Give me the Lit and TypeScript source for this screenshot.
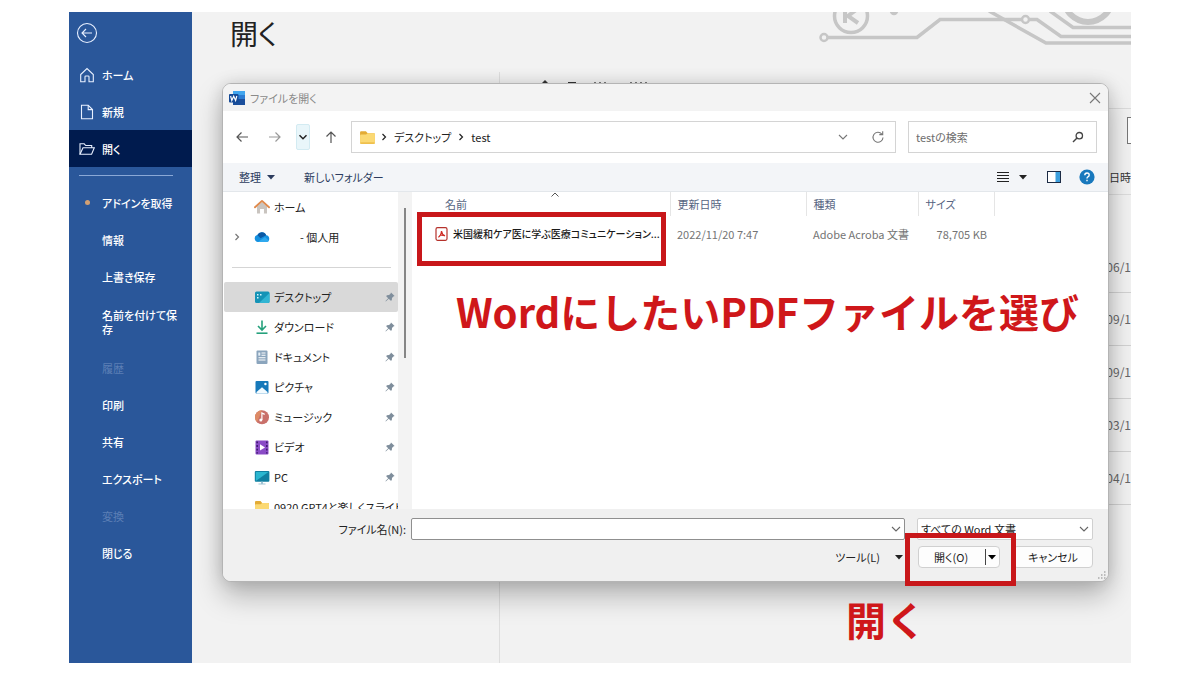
import { LitElement, html, css, svg, nothing } from "lit";
import { customElement } from "lit/decorators.js";
import { classMap } from "lit/directives/class-map.js";

const chevronDown = html`<svg class="chev" viewBox="0 0 10 10" width="10" height="10" aria-hidden="true">
  <path d="M1 3l4 4 4-4" fill="none" stroke="currentColor" stroke-width="1.1" />
</svg>`;
const chevronRight = html`<svg viewBox="0 0 8 8" width="8" height="8" aria-hidden="true">
  <path d="M2.5 1l3 3-3 3" fill="none" stroke="currentColor" stroke-width="1.2" />
</svg>`;
const triangle = html`<svg viewBox="0 0 8 5" width="8" height="5" aria-hidden="true">
  <path d="M0 0h8L4 4.6z" fill="currentColor" />
</svg>`;
const folderShape = svg`
  <path d="M1 3q0-1 1-1h4.5l1.7 2H14q1 0 1 1v8q0 1-1 1H2q-1 0-1-1z" fill="#e3ab35"/>
  <path d="M1 6q0-.8 1-.8h4.6L8.200 4H14q1 0 1 1v8q0 1-1 1H2q-1 0-1-1z" fill="#fbd974"/>
  <path d="M1.400 12.500h13.200V13q0 1-1 1H2.400q-1 0-1-1z" fill="#efc04d"/>`;
const pin = html`<svg viewBox="0 0 10 10" width="10" height="10" aria-hidden="true">
  <path d="M6 .4L9.600 4 8.400 4.500 7 6 6.800 8.200 5.800 8.800 3.700 6.800.8 9.400.5 9.100 3.200 6.300 1.200 4.200 1.900 3.300 4 3.100 5.500 1.700z" fill="#7f8e9c" />
</svg>`;

const paneIcons: Record<string, unknown> = {
  home: svg`<path d="M3 7.500L8 3l5 4.500V14.500H9.800V10H6.200v4.500H3z" fill="#c9c4bf"/>
    <path d="M9.800 10H6.200v4.500h3.600z" fill="#fff"/>
    <path d="M1 8.300L8 1.900l7 6.400" fill="none" stroke="#e08a4c" stroke-width="1.900" stroke-linecap="round" stroke-linejoin="round"/>`,
  cloud: svg`<path d="M4 13a3.500 3.500 0 0 1-.6-6.900A4.800 4.800 0 0 1 12.200 6.300a3.400 3.400 0 0 1 .4 6.700z" fill="#1490df"/>
    <path d="M3.400 6.100A4.800 4.800 0 0 1 12.200 6.300L6.500 9.200z" fill="#0c59a4"/>
    <path d="M4 13l7-5 4 3.700a3.300 3.300 0 0 1-2.400 1.300z" fill="#2fa9ee"/>`,
  desktop: svg`<rect x="1" y="2.500" width="14.500" height="11.500" rx="1.500" fill="#1593b6"/>
    <path d="M15.500 4v8.500q0 1.500-1.500 1.500H5z" fill="#31b5d3"/>
    <path d="M3 5h1.500v1.500H3zM3 8h1.500v1.500H3zM6 5h1.500v1.500H6z" fill="#d8f6ff"/>`,
  download: svg`<path d="M8 1.500v9M4 7l4 4 4-4" fill="none" stroke="#25a17c" stroke-width="1.600"/>
    <path d="M2.500 14.200h11" stroke="#25a17c" stroke-width="1.600"/>`,
  document: svg`<rect x="2.500" y="1.500" width="11" height="13.500" rx="1" fill="#8ba5bd"/>
    <path d="M7.500 4h4M7.500 6.200h4M4.500 8.700h7M4.500 11h7" stroke="#fff" stroke-width="1.100"/>
    <rect x="4.300" y="3.500" width="2" height="3.200" fill="#e6eff7"/>`,
  picture: svg`<rect x="1.500" y="2" width="13" height="12.500" rx="1" fill="#1779ba"/>
    <path d="M2.500 14.500V13L8 8.200l5.500 4.800v1.500z" fill="#f3fbff"/>
    <circle cx="11.400" cy="5" r="1.200" fill="#fff"/>`,
  music: svg`<circle cx="8" cy="8.200" r="7" fill="#c9706a"/>
    <path d="M8 1.200a7 7 0 0 0-7 7 7 7 0 0 0 2 5z" fill="#dd8b66"/>
    <path d="M7.900 11V4l2.800 1.400" fill="none" stroke="#fff" stroke-width="1.200"/>
    <circle cx="6.800" cy="11" r="1.500" fill="#fff"/>`,
  video: svg`<rect x="1.500" y="1.500" width="13" height="14" rx="1" fill="#8a4bc6"/>
    <path d="M3.200 2.500v12M12.800 2.500v12" stroke="#3f1c70" stroke-width="1.600" stroke-dasharray="1.800 1.800"/>
    <path d="M6 5.200l5 3.200-5 3.200z" fill="#fff"/>`,
  pc: svg`<rect x=".8" y="2" width="14.600" height="10.800" rx="1" fill="#117fa0"/>
    <path d="M1.800 12V3h12.600z" fill="#2bb6cf"/>
    <path d="M7 12.800h2v1.600h2.500v1h-7v-1H7z" fill="#9fc3d4"/>`,
  folder: folderShape,
};

const backstageIcons: Record<string, unknown> = {
  home: svg`<path d="M1.700 7.500L8 1.500l6.300 6v7.300H10V9.800q0-.8-.8-.8H6.800q-.8 0-.8.8v5H1.700z"/>`,
  fresh: svg`<path d="M2.500 1.300h6.700l4.300 4.300v9.200h-11z"/><path d="M9.200 1.300v4.300h4.300"/>`,
  open: svg`<path d="M1 13.300V2.800h4.200l1.500 1.700h6v2.300"/><path d="M1 13.300l3-6.500h11.300l-2.700 6.500z"/>`,
};

type Entry = { label: string; icon?: string; active?: boolean; off?: boolean; dot?: boolean; tall?: boolean };

const primary: Entry[] = [
  { label: "ホーム", icon: "home" },
  { label: "新規", icon: "fresh" },
  { label: "開く", icon: "open", active: true },
];
const secondary: Entry[] = [
  { label: "アドインを取得", dot: true },
  { label: "情報" },
  { label: "上書き保存" },
  { label: "名前を付けて保存", tall: true },
  { label: "履歴", off: true },
  { label: "印刷" },
  { label: "共有" },
  { label: "エクスポート" },
  { label: "変換", off: true },
  { label: "閉じる" },
];

const FONT = css`"Noto Sans CJK JP", "Noto Sans", sans-serif`;

const base = css`
  * { box-sizing: border-box; }
  button, input, select { font: inherit; color: inherit; margin: 0; padding: 0; border: 0; background: none; font-feature-settings: inherit; border-radius: 0; }
  button { display: inline-flex; align-items: center; justify-content: center; white-space: nowrap; }
  a { color: inherit; text-decoration: none; }
  ul { list-style: none; margin: 0; padding: 0; }
  svg { display: block; flex: none; }
`;

@customElement("backstage-nav")
class BackstageNav extends LitElement {
  static styles = [base, css`
    :host { display: flex; flex-direction: column; background: #2a579a; color: #fff; font-size: 11px; line-height: 14px; font-weight: 500; }
    .back { align-self: flex-start; width: 22px; height: 22px; margin: 10px 0 12px 7px; }
    .item { display: flex; align-items: center; height: 37px; padding: 0 12px 0 10px; gap: 7px; }
    .slot { flex: none; width: 16px; display: flex; justify-content: center; }
    .text { word-break: break-all; }
    .tall { height: 54px; }
    .active { background: #001b4e; }
    .off { color: #5c7fb5; font-weight: 400; }
    .dot { width: 5px; height: 5px; border-radius: 50%; background: #d3a073; }
    .rule { height: 1px; margin: 8px 19px 8px 10px; background: #8aa8d6; }
    .icon { fill: none; stroke: #e8f0ff; stroke-width: 1.1; }
  `];

  private entry(e: Entry) {
    return html`<li><a href="#" class=${classMap({ item: true, active: !!e.active, off: !!e.off, tall: !!e.tall })}>
      <span class="slot">${e.icon
        ? html`<svg class="icon" viewBox="0 0 16 16" width="16" height="16" aria-hidden="true">${backstageIcons[e.icon]}</svg>`
        : e.dot ? html`<span class="dot"></span>` : nothing}</span>
      <span class="text">${e.label}</span></a></li>`;
  }

  render() {
    return html`
      <button class="back" aria-label="戻る"><svg class="icon" viewBox="0 0 22 22" width="22" height="22">
        <circle cx="11" cy="11" r="9.500" /><path d="M16 11H6M10 7l-4 4 4 4" /></svg></button>
      <ul>${primary.map((e) => this.entry(e))}</ul>
      <div class="rule"></div>
      <ul>${secondary.map((e) => this.entry(e))}</ul>`;
  }
}

@customElement("open-dialog")
class OpenDialog extends LitElement {
  static styles = [base, css`
    :host {
      display: grid; grid-template-rows: 27px 52px 29px minmax(0, 1fr) 72px;
      background: #fff; border: 1px solid #b4b4b4; border-radius: 9px; font-size: 11px; line-height: 16px; color: #222;
      box-shadow: 0 14px 28px rgba(0, 0, 0, .26), 0 0 16px rgba(0, 0, 0, .12);
    }
    .title { display: flex; align-items: center; gap: 5px; padding: 0 7px 0 6px; background: #f3f3f3; border-radius: 8px 8px 0 0; color: #8a8a8a; }
    .title span { flex: 1; }
    .close { width: 12px; height: 12px; color: #777; }

    .nav { display: flex; align-items: center; padding: 0 11px 0 10px; color: #555; }
    .nav .step { width: 18px; height: 26px; margin-right: 15px; }
    .nav .recent { width: 14px; margin-left: -3px; background: #e9f6fa; border: 1px solid #d3ebf2; border-radius: 2px; color: #222; margin-right: 12px; }
    .nav .up { margin-right: 11px; }
    .box { height: 32px; border: 1px solid #d4d4d4; display: flex; align-items: center; }
    .address { flex: 1; padding: 0 10px 0 7px; gap: 4px; color: #222; }
    .address .grow { flex: 1; }
    .address .drop { margin-right: 19px; color: #777; }
    .address .crumb { padding: 0 2px; }
    .search { flex: 0 0 189px; margin-left: 12px; padding: 0 12px 0 7px; }
    .search input { flex: 1; min-width: 0; outline: 0; }
    .search input::placeholder { color: #6d6d6d; opacity: 1; }

    .tools { display: flex; align-items: center; padding: 0 13px 0 16px; background: #f3f5f8; border-bottom: 1px solid #e3e7eb; color: #2c3c5e; }
    .tools .sort { gap: 6px; }
    .tools .new { margin-left: 29px; }
    .tools .views { margin-left: auto; gap: 10px; color: #222; }
    .tools .preview { margin-left: 20px; }
    .tools .help { margin-left: 18px; }

    .body { display: grid; grid-template-columns: 175px 14px minmax(0, 1fr); overflow: hidden; }
    .pane { overflow: hidden; padding-left: 1px; }
    .pane a { display: flex; align-items: center; height: 30px; padding: 0 3px 0 9px; }
    .pane .twist { width: 9px; margin-right: 12px; color: #777; }
    .pane .label { flex: 1; margin-left: 4px; white-space: nowrap; overflow: hidden; }
    .pane .owner { padding-left: 26px; }
    .pane .indent { padding-left: 30px; }
    .pane .selected { background: #d9d9d9; border-radius: 2px; }
    .pane .cut { padding-right: 0; }
    .pane .split { height: 30px; padding: 15px 7px 0 8px; }
    .pane .split div { border-top: 1px solid #d5d5d5; }
    .track { background: #f3f3f3; padding: 16px 0 0 6px; }
    .thumb { width: 2px; height: 150px; background: #868686; }

    table { border-collapse: collapse; table-layout: fixed; width: 100%; color: #747474; }
    th { height: 24px; padding: 0 0 0 7px; text-align: left; font-weight: 400; color: #566582; border-right: 1px solid #e5e5e5; position: relative; }
    th:last-child { border-right: 0; }
    th:first-child { padding-left: 33px; }
    th svg { position: absolute; left: 138px; top: 0; }
    td { height: 36px; padding: 0 0 0 7px; white-space: nowrap; }
    td:first-child { padding: 0 8px 0 23px; }
    td:nth-child(4) { padding: 0 7px 0 0; text-align: right; }
    .name { width: 258px; } .date { width: 136px; } .kind { width: 112px; } .size { width: 76px; }
    .file { display: flex; align-items: center; gap: 5px; font-size: 10px; font-weight: 500; color: #1b1b1b; }

    .foot { display: grid; grid-template-rows: 22px 24px; align-content: start; row-gap: 5px; padding: 9px 15px 0 0; background: #f0f0f0; border-radius: 0 0 8px 8px; position: relative; }
    .line { display: flex; align-items: center; }
    .line label { width: 188px; padding-right: 5px; text-align: right; white-space: nowrap; }
    .field { position: relative; height: 22px; background: #fff; border: 1px solid #8f8f8f; border-radius: 2px; }
    .field input, .field select { width: 100%; height: 100%; appearance: none; outline: 0; padding: 0 20px 0 3px; display: block; }
    .field .chev { position: absolute; right: 3px; top: 5px; color: #666; pointer-events: none; }
    .fname { flex: 1; }
    .ftype { flex: 0 0 176px; margin-left: 12px; border-color: #d0d0d0; }
    .actions { justify-content: flex-end; }
    .actions button { height: 22px; }
    .actions .menu { gap: 15px; margin-right: 15px; }
    .push { background: #fdfdfd; border: 1px solid #d0d0d0; border-radius: 4px; }
    .actions .open { width: 82px; justify-content: space-between; padding: 0 3px 0 15px; }
    .more { display: flex; align-items: center; height: 16px; border-left: 1px solid #444; padding-left: 2px; color: #000; }
    .cancel { width: 80px; margin-left: 13px; }
    .grip { position: absolute; right: 2px; bottom: 1px; }
  `];

  private place(icon: string, label: string, cls = "", pinned = true) {
    return html`<li><a href="#" class="indent ${cls}">
      <svg viewBox="0 0 16 16" width="16" height="16" aria-hidden="true">${paneIcons[icon]}</svg>
      <span class="label">${label}</span>${pinned ? pin : nothing}</a></li>`;
  }

  render() {
    return html`
      <header class="title">
        <svg viewBox="0 0 16 16" width="16" height="16" aria-hidden="true">
          <rect x="4" y="1" width="12" height="14" rx="1" fill="#2b7cd3"/><path d="M4 1h12v4H4z" fill="#41a5ee"/><path d="M4 9h12v6H4z" fill="#1b4f9c"/>
          <rect x="0" y="4" width="9.500" height="8.500" rx="1" fill="#154a96"/>
          <path d="M1.600 6l1.200 4.500L4.700 6.300l1.900 4.200L7.800 6" fill="none" stroke="#fff" stroke-width="1.200"/></svg>
        <span>ファイルを開く</span>
        <button class="close" aria-label="閉じる"><svg viewBox="0 0 12 12" width="12" height="12"><path d="M1 1l10 10M11 1L1 11" stroke="currentColor" stroke-width="1.100"/></svg></button>
      </header>

      <div class="nav">
        <button class="step" aria-label="戻る"><svg viewBox="0 0 14 14" width="14" height="14"><path d="M13 7H2M6.500 2.500L2 7l4.500 4.500" fill="none" stroke="currentColor" stroke-width="1.200"/></svg></button>
        <button class="step" aria-label="進む"><svg viewBox="0 0 14 14" width="14" height="14"><path d="M1 7h11M7.500 2.500L12 7l-4.500 4.500" fill="none" stroke="#999" stroke-width="1.200"/></svg></button>
        <button class="step recent" aria-label="最近表示した場所"><svg viewBox="0 0 10 10" width="10" height="10"><path d="M1.500 3.200L5 6.700l3.500-3.500" fill="none" stroke="currentColor" stroke-width="1.500"/></svg></button>
        <button class="step up" aria-label="上へ"><svg viewBox="0 0 14 14" width="14" height="14"><path d="M7 13V2M2.500 6.500L7 2l4.500 4.500" fill="none" stroke="currentColor" stroke-width="1.200"/></svg></button>
        <div class="box address">
          <svg viewBox="0 0 16 16" width="17" height="17" aria-hidden="true">${folderShape}</svg>
          ${chevronRight}<button class="crumb">デスクトップ</button>${chevronRight}<button class="crumb">test</button>
          <span class="grow"></span>
          <button class="drop" aria-label="履歴を表示">${chevronDown}</button>
          <button aria-label="最新の情報に更新"><svg viewBox="0 0 14 14" width="14" height="14"><path d="M12 7.500A5 5 0 1 1 10.800 4M11.700 1.200V4.600H8.300" fill="none" stroke="#777" stroke-width="1.100"/></svg></button>
        </div>
        <div class="box search">
          <input type="text" aria-label="testの検索" placeholder="testの検索" />
          <svg viewBox="0 0 12 12" width="12" height="12" aria-hidden="true"><circle cx="7.300" cy="4.700" r="3.200" fill="none" stroke="#444" stroke-width="1.300"/><path d="M5 7L1 11" stroke="#444" stroke-width="1.500"/></svg>
        </div>
      </div>

      <div class="tools">
        <button class="sort">整理 ${triangle}</button>
        <button class="new">新しいフォルダー</button>
        <button class="views" aria-label="表示方法"><svg viewBox="0 0 12 12" width="12" height="12"><path d="M0 1.500h12M0 4.500h12M0 7.500h12M0 10.500h12" stroke="currentColor" stroke-width="1"/></svg>${triangle}</button>
        <button class="preview" aria-label="プレビュー"><svg viewBox="0 0 14 12" width="14" height="12"><rect x=".5" y=".5" width="13" height="11" fill="#fff" stroke="#1c2b45"/><path d="M8.500 1h4.500v10H8.500z" fill="#3c9fdd"/></svg></button>
        <button class="help" aria-label="ヘルプ"><svg viewBox="0 0 16 16" width="16" height="16"><circle cx="8" cy="8" r="7.600" fill="#1878bd"/><path d="M5.800 6.200q0-2.200 2.200-2.200t2.200 2q0 1.200-1.300 1.900-.9.500-.9 1.500M8 10.800v1.500" fill="none" stroke="#fff" stroke-width="1.400"/></svg></button>
      </div>

      <div class="body">
        <ul class="pane">
          ${this.place("home", "ホーム", "", false)}
          <li><a href="#"><span class="twist">${chevronRight}</span>
            <svg viewBox="0 0 16 16" width="16" height="16" aria-hidden="true">${paneIcons.cloud}</svg>
            <span class="label owner">- 個人用</span></a></li>
          <li class="split"><div></div></li>
          ${this.place("desktop", "デスクトップ", "selected")}
          ${this.place("download", "ダウンロード")}
          ${this.place("document", "ドキュメント")}
          ${this.place("picture", "ピクチャ")}
          ${this.place("music", "ミュージック")}
          ${this.place("video", "ビデオ")}
          ${this.place("pc", "PC")}
          ${this.place("folder", "0920 GPT4と楽しくスライド作", "cut", false)}
        </ul>
        <div class="track"><div class="thumb"></div></div>
        <div>
          <table>
            <thead><tr>
              <th class="name">名前<svg viewBox="0 0 10 6" width="10" height="6"><path d="M1.500 4.500L5 1l3.500 3.500" fill="none" stroke="#555"/></svg></th>
              <th class="date">更新日時</th><th class="kind">種類</th><th class="size">サイズ</th><th></th>
            </tr></thead>
            <tbody><tr>
              <td><div class="file">
                <svg viewBox="0 0 13 14" width="13" height="14" aria-hidden="true"><rect x="1" y=".7" width="11" height="12.600" rx="1.500" fill="#fff" stroke="#b5312b" stroke-width="1.200"/>
                  <path d="M3.300 10.300q2.700-1.600 3.200-6.300M6.500 4q.5 3.600 3.500 4.900M4.300 8.500q2.600-1 5.400.2" fill="none" stroke="#cf2b24" stroke-width="1.200"/></svg>
                <span>米国緩和ケア医に学ぶ医療コミュニケーション...</span></div></td>
              <td>2022/11/20 7:47</td><td>Adobe Acroba 文書</td><td>78,705 KB</td><td></td>
            </tr></tbody>
          </table>
        </div>
      </div>

      <footer class="foot">
        <div class="line">
          <label for="fn">ファイル名(N):</label>
          <div class="field fname"><input id="fn" type="text" />${chevronDown}</div>
          <div class="field ftype"><select aria-label="ファイルの種類"><option>すべての Word 文書</option></select>${chevronDown}</div>
        </div>
        <div class="line actions">
          <button class="menu">ツール(L) ${triangle}</button>
          <button class="push open">開く(O) <span class="more">${triangle}</span></button>
          <button class="push cancel">キャンセル</button>
        </div>
        <svg class="grip" viewBox="0 0 9 9" width="9" height="9" aria-hidden="true"><path d="M7 1h1.500M4 4h1.500M7 4h1.500M1 7h1.500M4 7h1.500M7 7h1.500" stroke="#aaa" stroke-width="1.500"/></svg>
      </footer>`;
  }
}

@customElement("app-root")
class AppRoot extends LitElement {
  static styles = [base, css`
    :host { display: block; min-height: 100vh; padding: 12px 69px; background: #fff; font-family: ${FONT}; font-feature-settings: "palt"; box-sizing: border-box; }
    .frame { display: grid; grid-template-columns: 123px minmax(0, 1fr); min-height: calc(100vh - 24px); }
    .main { position: relative; overflow: hidden; background: #f2f2f2; display: grid; grid-template-rows: 60px minmax(0, 1fr); }
    .head { display: flex; justify-content: space-between; align-items: flex-start; padding-left: 38px; }
    h1 { margin: 0; font-size: 28px; line-height: 42px; font-weight: 400; color: #222; }
    .cols { display: grid; grid-template-columns: 307px minmax(0, 1fr); }
    .recent { border-left: 1px solid #dedede; display: flex; flex-direction: column; text-align: right; font-size: 12px; color: #666; line-height: 16px; }
    .tabs { height: 37px; padding: 8px 0 0 39px; border-bottom: 1px solid #dcdcdc; }
    .find { height: 27px; width: 4px; margin: 8px 0 16px auto; border: 1px solid #777; border-right: 0; background: #fff; }
    .cell { height: 53px; padding-top: 18px; border-bottom: 1px solid #d2d2d2; white-space: nowrap; }
    .cell.th { height: 35px; padding-top: 9px; font-size: 11px; color: #333; border-color: #ddd; }
    .cell.first { height: 98px; padding-top: 64px; }
    .window { position: absolute; inset: 71px 22px 81px 30px; }
    .mark { position: absolute; border: 5px solid #c8171a; pointer-events: none; }
    .note { position: absolute; margin: 0; color: #cf171a; font-size: 40px; line-height: 48px; font-weight: 700; font-feature-settings: normal; white-space: nowrap; }
    .pick { left: 225px; top: 200px; width: 249px; height: 54px; }
    .picktext { left: 264px; top: 275px; }
    .go { right: 115px; bottom: 77px; width: 111px; height: 53px; }
    .gotext { right: 205px; bottom: 20px; }
  `];

  render() {
    return html`<div class="frame">
      <backstage-nav></backstage-nav>
      <main class="main">
        <div class="head">
          <h1>開く</h1>
          <svg viewBox="0 0 313 40" width="313" height="40" fill="none" stroke="#c6c6c6" stroke-width="3.500" aria-hidden="true">
            <circle cx="33" cy="4" r="16.500"/><path d="M27 -4v15M38 -2l-8 6 10 7" stroke-width="4"/>
            <circle cx="76" cy="-1" r="2.500" fill="#c6c6c6"/>
            <circle cx="6" cy="25.500" r="3.500" stroke-width="2.500"/><path d="M10 25.500h89l23-18h82"/>
            <circle cx="207.500" cy="7.500" r="3.500" stroke-width="2.500"/><path d="M212 7.500h7l24 17h70"/>
            <path d="M171 -1l57 32h85M232 -1l23 16.500h58"/>
            <circle cx="270" cy="-14" r="24" stroke-width="6"/>
          </svg>
        </div>
        <div class="cols">
          <div></div>
          <div class="recent">
            <div class="tabs"><svg viewBox="0 0 110 8" width="110" height="8" aria-hidden="true">
              <path d="M2 4l4-4 4 4zM29 2h8v1h-8z" fill="#333"/><path d="M55 2.500h14M91 2.500h17" stroke="#777" stroke-dasharray="2 3"/></svg></div>
            <div class="find"></div>
            <div class="cell th">更新日時</div>
            <div class="cell first">06/1</div>
            ${["09/1", "09/1", "03/1", "04/1"].map((d) => html`<div class="cell">${d}</div>`)}
          </div>
        </div>
        <open-dialog class="window"></open-dialog>
        <div class="mark pick"></div>
        <p class="note picktext">WordにしたいPDFファイルを選び</p>
        <div class="mark go"></div>
        <p class="note gotext">開く</p>
      </main>
    </div>`;
  }
}
